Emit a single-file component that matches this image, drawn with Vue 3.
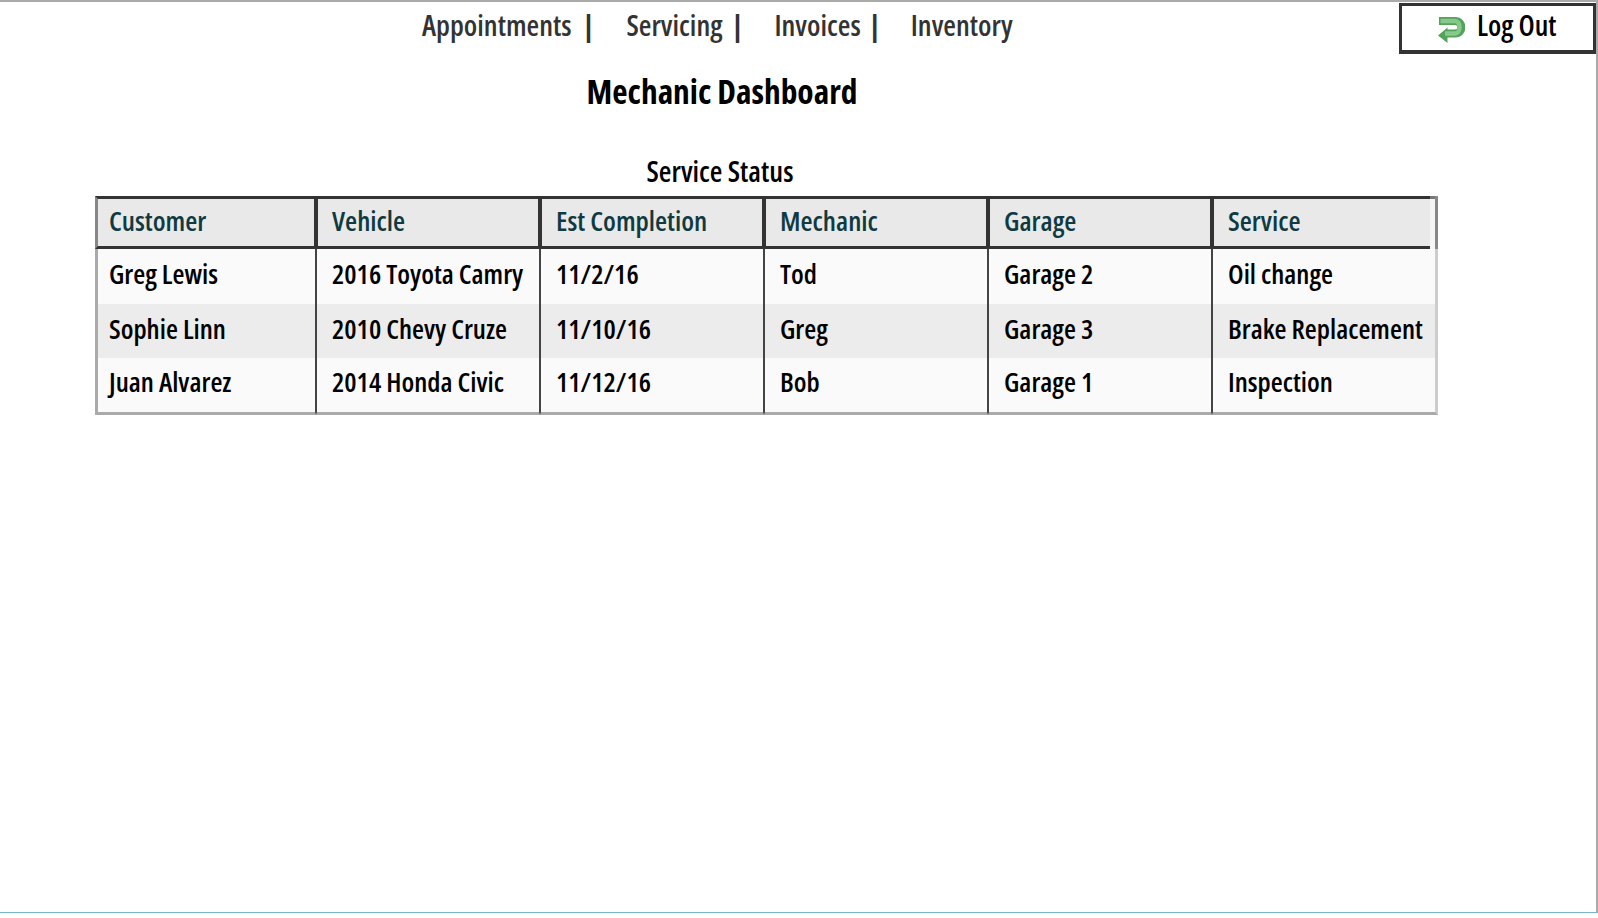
<script setup>
const navLinks = ['Appointments', 'Servicing', 'Invoices', 'Inventory']
const columns = ['Customer', 'Vehicle', 'Est Completion', 'Mechanic', 'Garage', 'Service']
const colWidths = [221, 224, 224, 224, 224, 226]
const rows = [
  ['Greg Lewis', '2016 Toyota Camry', '11/2/16', 'Tod', 'Garage 2', 'Oil change'],
  ['Sophie Linn', '2010 Chevy Cruze', '11/10/16', 'Greg', 'Garage 3', 'Brake Replacement'],
  ['Juan Alvarez', '2014 Honda Civic', '11/12/16', 'Bob', 'Garage 1', 'Inspection'],
]
</script>

<template>
  <div class="page">
    <header class="topbar">
      <nav class="nav">
        <template v-for="(link, i) in navLinks" :key="link">
          <a class="nav-link">{{ link }}</a>
          <span v-if="i < navLinks.length - 1" class="sep">|</span>
        </template>
      </nav>
      <button type="button" class="logout">
        <svg class="logout-icon" viewBox="0 0 27 26" width="27" height="26">
          <path d="M1 4 H17 C25.500 4 25.500 16.500 17 16.500 H8" fill="none" stroke="#52a35a" stroke-width="8" />
          <path d="M0 18.500 L9.500 10.500 V26 Z" fill="#52a35a" />
          <path d="M2.500 4 H17 C23 4 23 16.500 17 16.500 H7" fill="none" stroke="#86c98b" stroke-width="4.500" />
        </svg>
        <span class="logout-text">Log Out</span>
      </button>
    </header>

    <h1 class="title">Mechanic Dashboard</h1>
    <h2 class="subtitle">Service Status</h2>

    <table class="status">
      <colgroup>
        <col v-for="(w, i) in colWidths" :key="i" :style="{ width: w + 'px' }" />
      </colgroup>
      <thead>
        <tr>
          <th v-for="col in columns" :key="col">{{ col }}</th>
        </tr>
      </thead>
      <tbody>
        <tr v-for="row in rows" :key="row[0]">
          <td v-for="cell in row" :key="cell">{{ cell }}</td>
        </tr>
      </tbody>
    </table>
  </div>
</template>

<style>
html, body {
  margin: 0;
  background: #fff;
}
</style>

<style scoped>
.page {
  box-sizing: border-box;
  width: 1598px;
  height: 913px;
  border-top: 2px solid #aaa;
  border-right: 2px solid #aaa;
  border-bottom: 1px solid #7ab4cf;
  font-family: "Open Sans", sans-serif;
  font-stretch: 75%;
  color: #000;
  overflow: hidden;
}

.topbar {
  display: flex;
  height: 52px;
  padding-left: 422px;
}

.nav {
  display: flex;
  align-items: center;
  height: 44px;
  font-size: 29px;
  font-weight: 600;
  color: #333;
}

.sep {
  margin: 0 32px 0 11px;
  font-weight: 700;
}

.sep:nth-of-type(2) {
  margin: 0 31px 0 9px;
}

.sep:nth-of-type(3) {
  margin: 0 30px 0 8px;
}

.logout {
  box-sizing: border-box;
  display: flex;
  align-items: center;
  gap: 12px;
  margin: 1px 0 0 auto;
  width: 197px;
  height: 51px;
  padding: 0 0 0 36px;
  border: 3px solid #333;
  border-bottom-width: 4px;
  background: #fff;
  font: inherit;
  font-size: 28.5px;
  font-weight: 600;
  color: #000;
}

.logout-icon {
  margin-top: 3px;
}

.logout-text {
  padding-bottom: 6px;
}

.title {
  margin: 14px 0 0;
  width: 1444px;
  text-align: center;
  font-size: 33.4px;
  font-weight: 700;
  line-height: 46px;
}

.subtitle {
  margin: 37px 0 0;
  width: 1440px;
  text-align: center;
  font-size: 29px;
  font-weight: 600;
  line-height: 40px;
}

.status {
  margin: 5px 0 0 95px;
  width: 1343px;
  table-layout: fixed;
  border-collapse: separate;
  border-spacing: 0;
  font-size: 27.5px;
  font-weight: 600;
}

th {
  box-sizing: border-box;
  height: 53px;
  padding: 0 0 6px 14px;
  text-align: left;
  font-size: 27.7px;
  font-weight: 600;
  color: #0f3a42;
  background: #e9e9e9;
  border-top: 3px solid #333;
  border-bottom: 3px solid #333;
  border-left: 2px solid #333;
  border-right: 2px solid #333;
}

th:first-child {
  padding-left: 11px;
  border-left: 3px solid #888;
}

/* last header cell: dark rules stop short of the grey outer edge */
th:last-child {
  border: 0;
  border-left: 2px solid #333;
  border-right: 3px solid #888;
  padding-top: 3px;
  padding-bottom: 9px;
  background:
    linear-gradient(#333, #333) left top / calc(100% - 5px) 3px no-repeat,
    linear-gradient(#333, #333) left bottom / calc(100% - 5px) 3px no-repeat,
    linear-gradient(#777, #777) right top / 5px 3px no-repeat,
    linear-gradient(#e9e9e9, #e9e9e9) left top / calc(100% - 5px) 100% no-repeat,
    #f5f5f5;
}

td {
  box-sizing: border-box;
  height: 54px;
  padding: 0 0 6px 15px;
  background: #fafafa;
  border-left: 1px solid #444;
  border-right: 1px solid #444;
  white-space: nowrap;
}

td:first-child {
  padding-left: 11px;
  border-left: 3px solid #aaa;
}

td:last-child {
  border-right: 3px solid #ccc;
}

tbody tr:first-child td {
  height: 55px;
}

tbody tr:nth-child(2) td {
  background: #ececec;
}

tbody tr:last-child td {
  height: 57px;
  padding-bottom: 7px;
  border-bottom: 3px solid #aaa;
}
</style>
